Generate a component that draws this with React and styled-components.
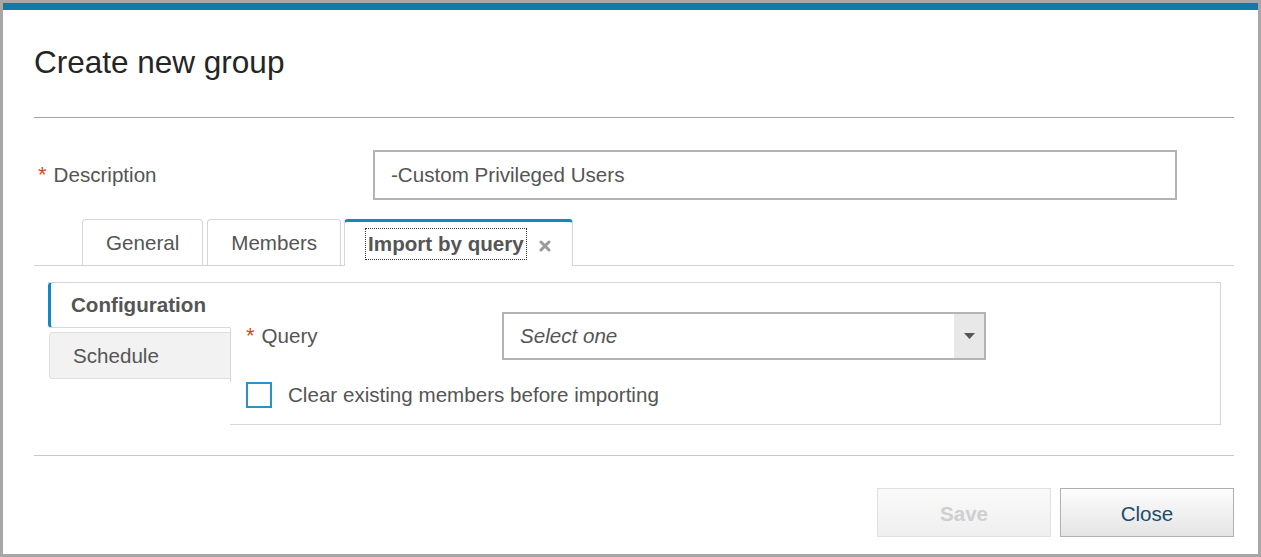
import React from "react";
import styled, { createGlobalStyle } from "styled-components";

const GlobalStyle = createGlobalStyle`
  html, body {
    margin: 0;
    padding: 0;
  }
  body {
    background: #a7a7a7;
    font-family: "Liberation Sans", Arial, sans-serif;
  }
`;

const Frame = styled.div`
  width: 1261px;
  height: 557px;
  box-sizing: border-box;
  padding: 3px;
`;

const Dialog = styled.div`
  height: 100%;
  box-sizing: border-box;
  background: #fff;
  border-top: 7px solid #117aab;
  padding: 0 24px 17px 31px;
  display: flex;
  flex-direction: column;
`;

const Title = styled.h1`
  margin: 35px 0 0;
  font-size: 31.5px;
  line-height: 34px;
  font-weight: normal;
  color: #252525;
`;

const Divider = styled.hr`
  margin: ${(p) => p.$top}px 0 0;
  border: none;
  border-top: 1px solid ${(p) => p.$color};
  height: 0;
`;

const FieldRow = styled.div`
  display: flex;
  align-items: center;
  margin-top: 32px;
`;

const Label = styled.label`
  width: ${(p) => p.$width}px;
  flex-shrink: 0;
  box-sizing: border-box;
  padding-left: ${(p) => p.$indent || 0}px;
  font-size: 20.6px;
  color: #555;
`;

const Star = styled.span`
  color: #c9501f;
  font-size: 22px;
  margin-right: 7px;
`;

const TextInput = styled.div`
  width: 804px;
  height: 50px;
  box-sizing: border-box;
  border: 2px solid #b4b4b4;
  padding: 0 16px;
  display: flex;
  align-items: center;
  font-size: 20.6px;
  color: #555;
`;

const TabStrip = styled.div`
  margin-top: 19px;
  display: flex;
  align-items: flex-end;
  border-bottom: 1px solid #d2d2d2;
  padding-left: 48px;
  height: 46px;
`;

const Tab = styled.div`
  height: ${(p) => (p.$active ? 47 : 46)}px;
  margin-right: ${(p) => p.$gap}px;
  margin-bottom: ${(p) => (p.$active ? -1 : 0)}px;
  box-sizing: border-box;
  padding: 0 ${(p) => (p.$active ? 21 : 23)}px 0 23px;
  display: flex;
  align-items: center;
  gap: 15px;
  background: #fff;
  border: 1px solid #d6d6d6;
  border-bottom: none;
  border-top: ${(p) => (p.$active ? "3px solid #1387c2" : "1px solid #d6d6d6")};
  border-radius: 4px 4px 0 0;
  font-size: 20.6px;
  font-weight: ${(p) => (p.$active ? "bold" : "normal")};
  color: #555;
`;

const Focus = styled.span`
  outline: 1px dotted #333;
  outline-offset: 2px;
  line-height: 26px;
`;

const CloseX = styled.svg`
  width: 12px;
  height: 12px;
  margin-top: 3px;
`;

const Body = styled.div`
  display: flex;
  margin: 16px 0 0 14px;
  width: 1173px;
`;

const SideTabs = styled.div`
  width: 182px;
  flex-shrink: 0;
  display: flex;
  flex-direction: column;
  gap: 4px;
`;

const SideTab = styled.div`
  height: ${(p) => (p.$active ? 46 : 47)}px;
  box-sizing: border-box;
  margin-left: ${(p) => (p.$active ? 0 : 1)}px;
  display: flex;
  align-items: center;
  padding-left: ${(p) => (p.$active ? 20 : 23)}px;
  font-size: 20.6px;
  font-weight: ${(p) => (p.$active ? "bold" : "normal")};
  color: #555;
  background: ${(p) => (p.$active ? "#fff" : "#f2f2f2")};
  border: 1px solid ${(p) => (p.$active ? "#d8d8d8" : "#dedede")};
  border-left: ${(p) => (p.$active ? "3px solid #1387c2" : "1px solid #dedede")};
  border-right: none;
  border-radius: 4px 0 0 4px;
`;

const Panel = styled.div`
  flex: 1;
  height: 143px;
  box-sizing: border-box;
  border: 1px solid #d6d6d6;
  border-left: none;
  border-top: none;
  padding: 30px 0 0 16px;
  display: flex;
  flex-direction: column;
  position: relative;
  &::before {
    content: "";
    position: absolute;
    left: 0;
    top: 46px;
    height: 54px;
    border-left: 1px solid #d6d6d6;
  }
  &::after {
    content: "";
    position: absolute;
    left: -182px;
    right: -1px;
    top: 0;
    border-top: 1px solid #d6d6d6;
  }
`;

const QueryRow = styled.div`
  display: flex;
  align-items: center;
`;

const Select = styled.div`
  width: 484px;
  height: 48px;
  box-sizing: border-box;
  border: 2px solid #b4b4b4;
  display: flex;
  align-items: stretch;
`;

const SelectText = styled.div`
  flex: 1;
  display: flex;
  align-items: center;
  padding-left: 16px;
  font-size: 20.6px;
  font-style: italic;
  color: #555;
`;

const Caret = styled.div`
  width: 30px;
  background: #e8e8e8;
  display: flex;
  align-items: center;
  justify-content: center;
`;

const CheckRow = styled.div`
  display: flex;
  align-items: center;
  gap: 16px;
  margin-top: 21px;
  font-size: 20.6px;
  color: #555;
  line-height: 28px;
`;

const Box = styled.span`
  width: 26px;
  height: 26px;
  box-sizing: border-box;
  border: 2px solid #2b92c8;
  background: #fff;
`;

const Footer = styled.div`
  margin-top: auto;
  display: flex;
  justify-content: flex-end;
  gap: 9px;
`;

const Button = styled.button`
  width: ${(p) => p.$width}px;
  height: 49px;
  box-sizing: border-box;
  padding: 3px 0 0;
  font-family: inherit;
  font-size: 20.6px;
  font-weight: ${(p) => (p.$disabled ? "bold" : "normal")};
  color: ${(p) => (p.$disabled ? "#cfcfcf" : "#194f6d")};
  border: 1px solid ${(p) => (p.$disabled ? "#e0e0e0" : "#b0b0b0")};
  background: ${(p) =>
    p.$disabled
      ? "linear-gradient(#fafafa, #efefef)"
      : "linear-gradient(#fdfdfd, #e4e4e4)"};
  border-radius: 0;
`;

export default function App() {
  return (
    <>
      <GlobalStyle />
      <Frame>
        <Dialog>
          <Title>Create new group</Title>
          <Divider $top={38} $color="#a3a3a3" />
          <FieldRow>
            <Label $width={339} $indent={4}>
              <Star>*</Star>Description
            </Label>
            <TextInput>-Custom Privileged Users</TextInput>
          </FieldRow>
          <TabStrip>
            <Tab $gap={4}>General</Tab>
            <Tab $gap={3}>Members</Tab>
            <Tab $active>
              <Focus>Import by query</Focus>
              <CloseX viewBox="0 0 12 12">
                <path d="M2 2 L10 10 M10 2 L2 10" stroke="#9a9a9a" strokeWidth="3" strokeLinecap="round" />
              </CloseX>
            </Tab>
          </TabStrip>
          <Body>
            <SideTabs>
              <SideTab $active>Configuration</SideTab>
              <SideTab>Schedule</SideTab>
            </SideTabs>
            <Panel>
              <QueryRow>
                <Label $width={256}>
                  <Star>*</Star>Query
                </Label>
                <Select>
                  <SelectText>Select one</SelectText>
                  <Caret>
                    <svg width="11" height="6" viewBox="0 0 11 6">
                      <path d="M0 0 H11 L5.5 6 Z" fill="#555" />
                    </svg>
                  </Caret>
                </Select>
              </QueryRow>
              <CheckRow>
                <Box />
                Clear existing members before importing
              </CheckRow>
            </Panel>
          </Body>
          <Divider $top={30} $color="#c8c8c8" />
          <Footer>
            <Button $width={174} $disabled>Save</Button>
            <Button $width={174}>Close</Button>
          </Footer>
        </Dialog>
      </Frame>
    </>
  );
}
